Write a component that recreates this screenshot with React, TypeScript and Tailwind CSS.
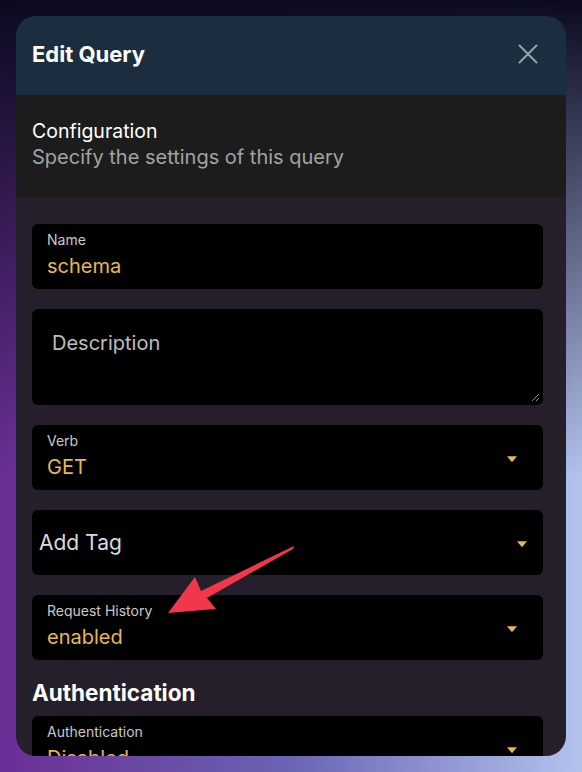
import { ReactNode } from "react";

const font = { fontFamily: "Inter, 'Noto Sans', sans-serif" };

function Caret({ className = "" }: { className?: string }) {
  return (
    <svg width="12" height="8" viewBox="0 0 12 8" className={className}>
      <path d="M1 1.2 H11 L6.6 6.6 Q6 7.2 5.4 6.6 Z" fill="#e8b84a" />
    </svg>
  );
}

function Field({ label, value, caret }: { label: string; value: string; caret?: boolean }) {
  return (
    <div className="relative h-[65px] rounded-[6px] bg-black px-[15px]">
      <div className="pt-[7px] text-[14px] leading-[18px] text-[#c9c9c9]">{label}</div>
      <div className="mt-[4px] text-[20px] leading-[26px] text-[#e9b94b]">{value}</div>
      {caret && (
        <div className="absolute right-[25px] top-[30px]">
          <Caret />
        </div>
      )}
    </div>
  );
}

function Section({ children, className = "" }: { children: ReactNode; className?: string }) {
  return <div className={className}>{children}</div>;
}

export default function App() {
  return (
    <div
      className="relative h-[772px] w-[582px] overflow-hidden p-4 bg-[linear-gradient(to_bottom,#0b0a1f_0%,#0b0a1f00_62%),linear-gradient(to_right,#6b2e96_0%,#6a64b4_50%,#b3c3ee_100%)]"
      style={font}
    >
      <div className="flex h-[740px] w-[550px] flex-col overflow-hidden rounded-[20px] bg-[#241f2a]">
        {/* header */}
        <div className="flex h-[79px] shrink-0 items-center justify-between bg-[#1b2e3f] pl-4 pr-[28px]">
          <h1 className="mt-[-4px] text-[22px] font-bold leading-none text-white">Edit Query</h1>
          <svg width="20" height="20" viewBox="0 0 20 20" className="mt-[-4px]">
            <path d="M1.5 1.5 L18.5 18.5 M18.5 1.5 L1.5 18.5" stroke="#98a3ad" strokeWidth="2" strokeLinecap="round" />
          </svg>
        </div>

        {/* configuration */}
        <Section className="h-[102px] shrink-0 bg-[#1c1c1c] px-4 pt-[23px]">
          <div className="text-[19.5px] leading-[26px] text-white">Configuration</div>
          <div className="text-[20px] leading-[26px] text-[#a3a3a3]">Specify the settings of this query</div>
        </Section>

        {/* body */}
        <div className="flex flex-col gap-5 pl-4 pr-[23px] pt-[27px]">
          <Field label="Name" value="schema" />

          <div className="relative h-[96px] rounded-[6px] bg-black px-5 pt-[21px]">
            <div className="text-[20px] leading-[26px] text-[#bdbdbd]">Description</div>
            <svg width="9" height="9" viewBox="0 0 9 9" className="absolute bottom-[3px] right-[3px]">
              <path d="M8 1 L1 8 M8 5 L5 8" stroke="#8a8a8a" strokeWidth="1" />
            </svg>
          </div>

          <Field label="Verb" value="GET" caret />

          <div className="relative flex h-[65px] items-center rounded-[6px] bg-black px-[7px]">
            <span className="text-[21px] leading-[26px] text-[#dadada]">Add Tag</span>
            <div className="absolute right-[15px] top-[30px]">
              <Caret />
            </div>
          </div>

          <Field label="Request History" value="enabled" caret />

          <div>
            <h2 className="mt-[-1px] text-[22.5px] font-bold leading-[28px] text-white">Authentication</h2>
            <div className="mt-[9px]">
              <Field label="Authentication" value="Disabled" caret />
            </div>
          </div>
        </div>
      </div>

      {/* annotation arrow */}
      <svg width="582" height="772" className="pointer-events-none absolute left-0 top-0">
        <path
          d="M294 546 L293 549 L207 598 L216 609 L168 613 L195 577 L201 591 Z"
          fill="#f0384a"
          strokeLinejoin="round"
        />
      </svg>
    </div>
  );
}
